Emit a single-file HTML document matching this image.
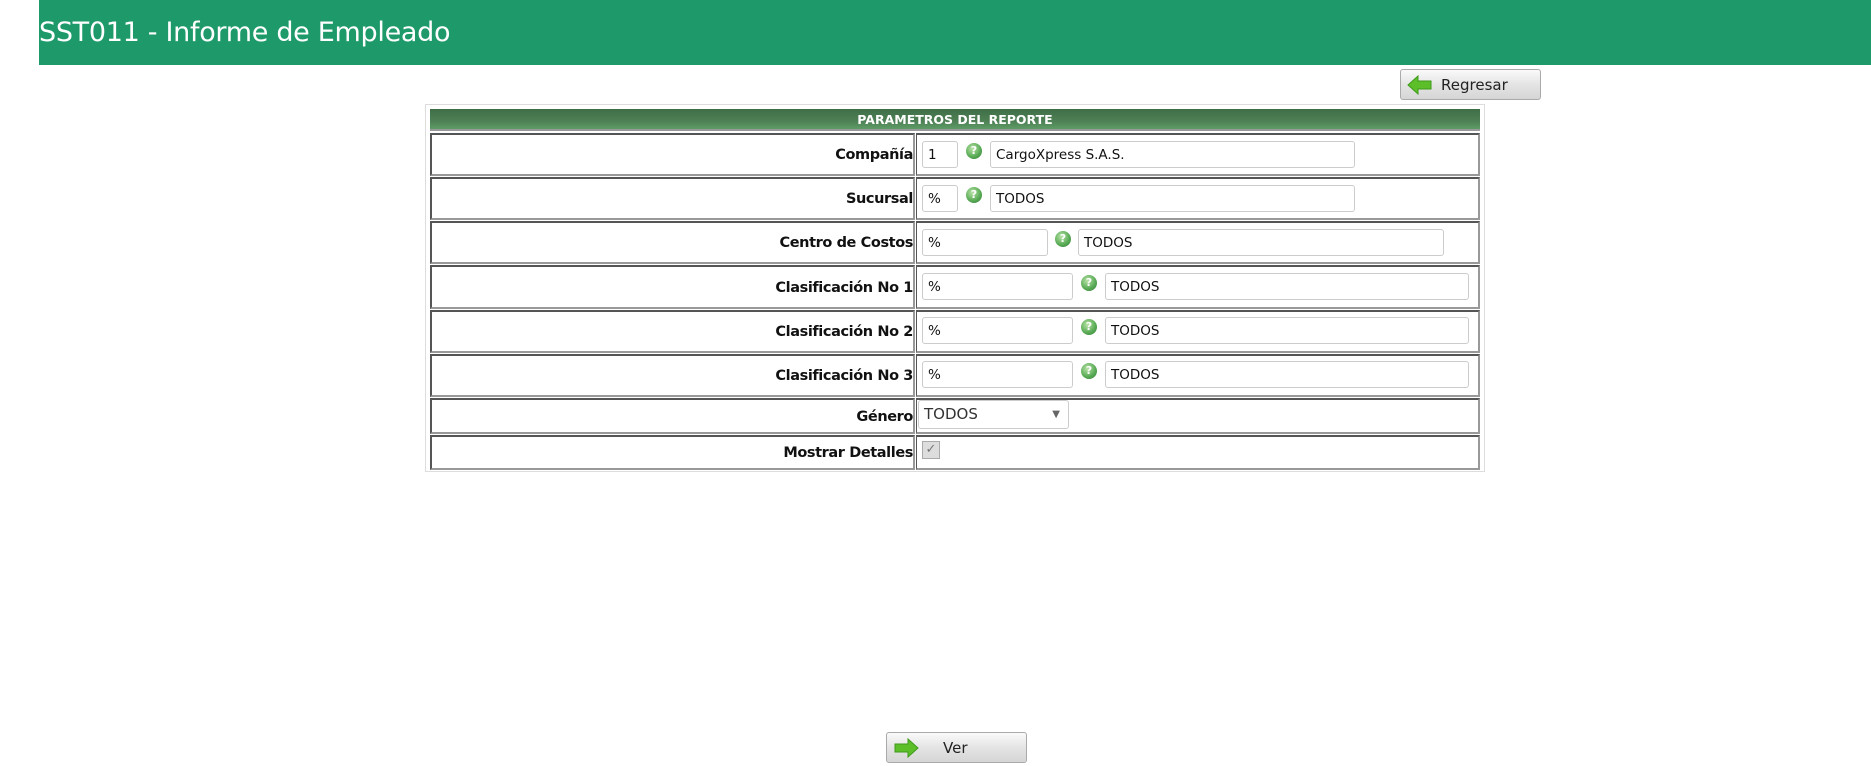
<!DOCTYPE html>
<html><head><meta charset="utf-8"><style>
*{box-sizing:border-box;margin:0;padding:0}
body{width:1871px;height:766px;background:#fff;position:relative;overflow:hidden;font-family:"DejaVu Sans","Liberation Sans",sans-serif}
.abs{position:absolute}
#hdr{left:39px;top:0;width:1832px;height:65px;background:#1e9a6a;color:#fff;font-size:27px;line-height:66px;white-space:nowrap;letter-spacing:-0.3px}
.btn{position:absolute;border:1px solid #aaa;border-radius:3px;background:linear-gradient(#fafafa,#e4e4e4 50%,#d6d6d6);font-size:15px;color:#222;font-family:"DejaVu Sans",sans-serif}
.btn svg{position:absolute;left:6px;top:5px}
.btn span{position:absolute;top:6px}
#outer{left:425px;top:104px;width:1060px;height:368px;border:1px solid #ddd}
#th{left:430px;top:109px;width:1050px;height:22px;background:linear-gradient(#3f6e46,#4e8055 60%,#5c9c65);color:#fff;font-weight:bold;font-size:12.5px;text-align:center;line-height:22px;border-bottom:2px solid #999}
.cell{position:absolute;border:2px solid;border-color:#555 #999 #999 #555;background:#fff}
.v{border-left-width:1px}
.lab{font-weight:bold;font-size:14.5px;text-align:right;padding-right:0;color:#111;font-family:"DejaVu Sans",sans-serif;letter-spacing:-0.4px}
.inp{position:absolute;border:1px solid #ccc;border-radius:3px;background:#fff;font-size:13.5px;padding-left:5px;line-height:26px;color:#111;height:27px}
.ic{position:absolute;width:16px;height:16px;border-radius:50%;background:radial-gradient(circle at 40% 35%,#b9e3a8,#5cad58 55%,#2f7a35);color:#fff;font-size:11px;font-weight:bold;text-align:center;line-height:16px}
</style></head><body>
<div id="hdr" class="abs">SST011 - Informe de Empleado</div>

<div class="btn" style="left:1400px;top:69px;width:141px;height:31px">
<svg width="26" height="20" viewBox="0 0 26 20"><path d="M1 10 L11 1 L11 6 L24 6 L24 14 L11 14 L11 19 Z" fill="#5cbf2a" stroke="#3e9a1a" stroke-width="1"/></svg>
<span style="left:40px">Regresar</span></div>

<div id="outer" class="abs"></div>
<div id="th" class="abs">PARAMETROS DEL REPORTE</div>

<div class="cell lab" style="left:430px;top:133px;width:485px;height:43px;line-height:41px">Compañía</div>
<div class="cell v" style="left:916px;top:133px;width:564px;height:43px"></div>
<div class="inp" style="left:922px;top:141px;width:36px">1</div>
<div class="ic" style="left:966px;top:143px">?</div>
<div class="inp" style="left:990px;top:141px;width:365px">CargoXpress S.A.S.</div>

<div class="cell lab" style="left:430px;top:177px;width:485px;height:43px;line-height:41px">Sucursal</div>
<div class="cell v" style="left:916px;top:177px;width:564px;height:43px"></div>
<div class="inp" style="left:922px;top:185px;width:36px">%</div>
<div class="ic" style="left:966px;top:187px">?</div>
<div class="inp" style="left:990px;top:185px;width:365px">TODOS</div>

<div class="cell lab" style="left:430px;top:221px;width:485px;height:43px;line-height:41px">Centro de Costos</div>
<div class="cell v" style="left:916px;top:221px;width:564px;height:43px"></div>
<div class="inp" style="left:922px;top:229px;width:126px">%</div>
<div class="ic" style="left:1055px;top:231px">?</div>
<div class="inp" style="left:1078px;top:229px;width:366px">TODOS</div>

<div class="cell lab" style="left:430px;top:265px;width:485px;height:44px;line-height:42px">Clasificación No 1</div>
<div class="cell v" style="left:916px;top:265px;width:564px;height:44px"></div>
<div class="inp" style="left:922px;top:273px;width:151px">%</div>
<div class="ic" style="left:1081px;top:275px">?</div>
<div class="inp" style="left:1105px;top:273px;width:364px">TODOS</div>

<div class="cell lab" style="left:430px;top:310px;width:485px;height:43px;line-height:41px">Clasificación No 2</div>
<div class="cell v" style="left:916px;top:310px;width:564px;height:43px"></div>
<div class="inp" style="left:922px;top:317px;width:151px">%</div>
<div class="ic" style="left:1081px;top:319px">?</div>
<div class="inp" style="left:1105px;top:317px;width:364px">TODOS</div>

<div class="cell lab" style="left:430px;top:354px;width:485px;height:43px;line-height:41px">Clasificación No 3</div>
<div class="cell v" style="left:916px;top:354px;width:564px;height:43px"></div>
<div class="inp" style="left:922px;top:361px;width:151px">%</div>
<div class="ic" style="left:1081px;top:363px">?</div>
<div class="inp" style="left:1105px;top:361px;width:364px">TODOS</div>

<div class="cell lab" style="left:430px;top:398px;width:485px;height:36px;line-height:34px">Género</div>
<div class="cell v" style="left:916px;top:398px;width:564px;height:36px"></div>
<div class="inp" style="left:918px;top:400px;width:151px;height:29px;line-height:27px;font-size:15px;color:#333">TODOS<span style="position:absolute;right:8px;top:0;font-size:10px;color:#666">▼</span></div>

<div class="cell lab" style="left:430px;top:435px;width:485px;height:35px;line-height:33px">Mostrar Detalles</div>
<div class="cell v" style="left:916px;top:435px;width:564px;height:35px"></div>
<div class="abs" style="left:922px;top:441px;width:18px;height:18px;border:1px solid #aaa;background:#ddd;color:#777;font-size:13px;line-height:16px;text-align:center">✓</div>

<div class="btn" style="left:886px;top:732px;width:141px;height:31px">
<svg width="26" height="20" viewBox="0 0 26 20"><path d="M25 10 L15 1 L15 6 L2 6 L2 14 L15 14 L15 19 Z" fill="#5cbf2a" stroke="#3e9a1a" stroke-width="1"/></svg>
<span style="left:56px">Ver</span></div>
</body></html>
